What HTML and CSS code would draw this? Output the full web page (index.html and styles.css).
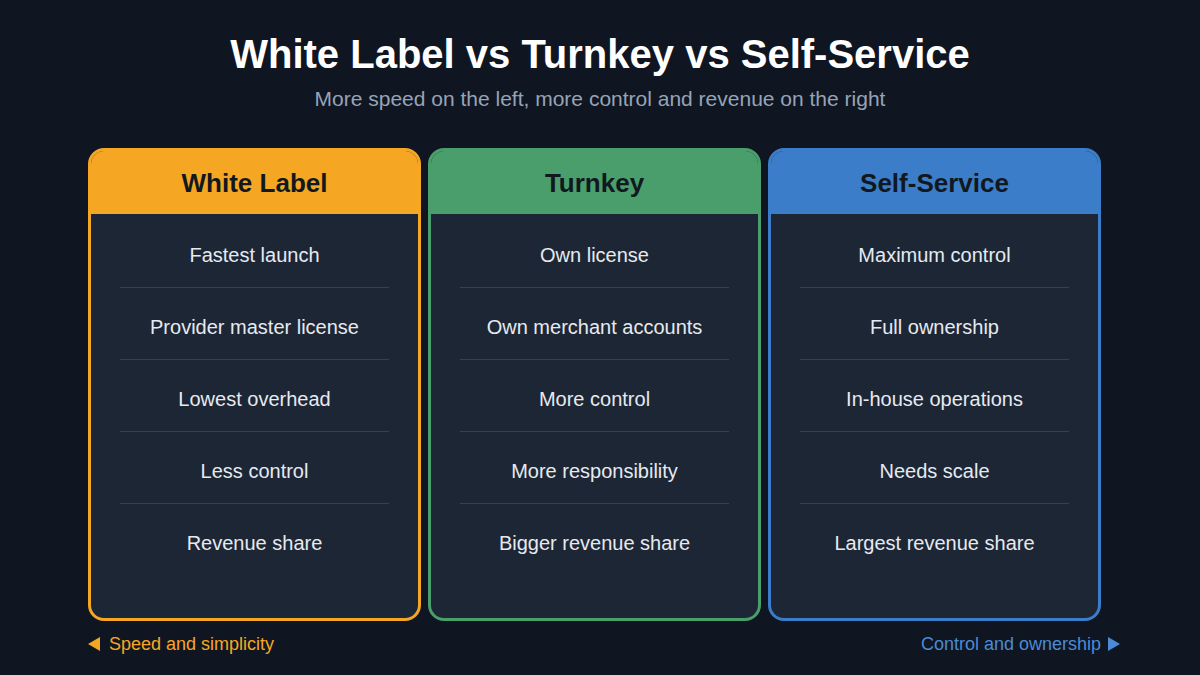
FILE: index.html
```html
<!DOCTYPE html>
<html>
<head>
<meta charset="utf-8">
<link rel="stylesheet" href="styles.css">
</head>
<body>
<div class="page">
  <h1 class="title">White Label vs Turnkey vs Self-Service</h1>
  <p class="subtitle">More speed on the left, more control and revenue on the right</p>
  <div class="cards">
    <div class="card card-orange">
      <div class="card-head">White Label</div>
      <ul class="card-body">
        <li>Fastest launch</li>
        <li>Provider master license</li>
        <li>Lowest overhead</li>
        <li>Less control</li>
        <li>Revenue share</li>
      </ul>
    </div>
    <div class="card card-green">
      <div class="card-head">Turnkey</div>
      <ul class="card-body">
        <li>Own license</li>
        <li>Own merchant accounts</li>
        <li>More control</li>
        <li>More responsibility</li>
        <li>Bigger revenue share</li>
      </ul>
    </div>
    <div class="card card-blue">
      <div class="card-head">Self-Service</div>
      <ul class="card-body">
        <li>Maximum control</li>
        <li>Full ownership</li>
        <li>In-house operations</li>
        <li>Needs scale</li>
        <li>Largest revenue share</li>
      </ul>
    </div>
  </div>
  <div class="footer">
    <span class="hint hint-left"><span class="tri tri-left"></span>Speed and simplicity</span>
    <span class="hint hint-right">Control and ownership<span class="tri tri-right"></span></span>
  </div>
</div>
</body>
</html>
```

FILE: styles.css
```css
html, body {
  margin: 0;
  padding: 0;
}
body {
  background: #0f1622;
  font-family: "Liberation Sans", Arial, sans-serif;
  width: 1200px;
  height: 675px;
  overflow: hidden;
}
.page {
  display: flex;
  flex-direction: column;
  align-items: stretch;
  height: 675px;
}
.title {
  margin: 31px 0 0;
  text-align: center;
  color: #ffffff;
  font-size: 40px;
  line-height: 46px;
  font-weight: 700;
}
.subtitle {
  margin: 10px 0 0;
  text-align: center;
  color: #97a3b6;
  font-size: 21px;
  line-height: 24px;
}
.cards {
  display: flex;
  gap: 7px;
  margin: 37px 0 0 88px;
}
.card {
  width: 333px;
  height: 473px;
  box-sizing: border-box;
  border: 3px solid;
  border-radius: 16px;
  background: #1d2635;
  overflow: hidden;
  display: flex;
  flex-direction: column;
}
.card-orange { border-color: #f5a623; }
.card-green { border-color: #4a9e6b; }
.card-blue { border-color: #3b7dc8; }
.card-head {
  height: 63px;
  box-sizing: border-box;
  padding-top: 2px;
  display: flex;
  align-items: center;
  justify-content: center;
  font-size: 26px;
  font-weight: 700;
  color: #111820;
}
.card-orange .card-head { background: #f5a623; }
.card-green .card-head { background: #4a9e6b; }
.card-blue .card-head { background: #3b7dc8; }
.card-body {
  list-style: none;
  margin: 0;
  padding: 2px 29px 0;
}
.card-body li {
  text-align: center;
  color: #e6eaf0;
  font-size: 20px;
  line-height: 22px;
  padding: 28px 0 21px;
  border-bottom: 1px solid #334155;
}
.card-body li:last-child {
  border-bottom: none;
}
.footer {
  display: flex;
  justify-content: space-between;
  margin: 12px 0 0 88px;
  padding-right: 80px;
  font-size: 18px;
  line-height: 22px;
}
.hint {
  display: flex;
  align-items: center;
}
.hint-left { color: #f5a623; }
.hint-right { color: #4a8bd6; }
.tri {
  width: 0;
  height: 0;
  border-top: 7px solid transparent;
  border-bottom: 7px solid transparent;
}
.tri-left {
  border-right: 12px solid #f5a623;
  margin-right: 9px;
}
.tri-right {
  border-left: 12px solid #4a8bd6;
  margin-left: 7px;
}
```
